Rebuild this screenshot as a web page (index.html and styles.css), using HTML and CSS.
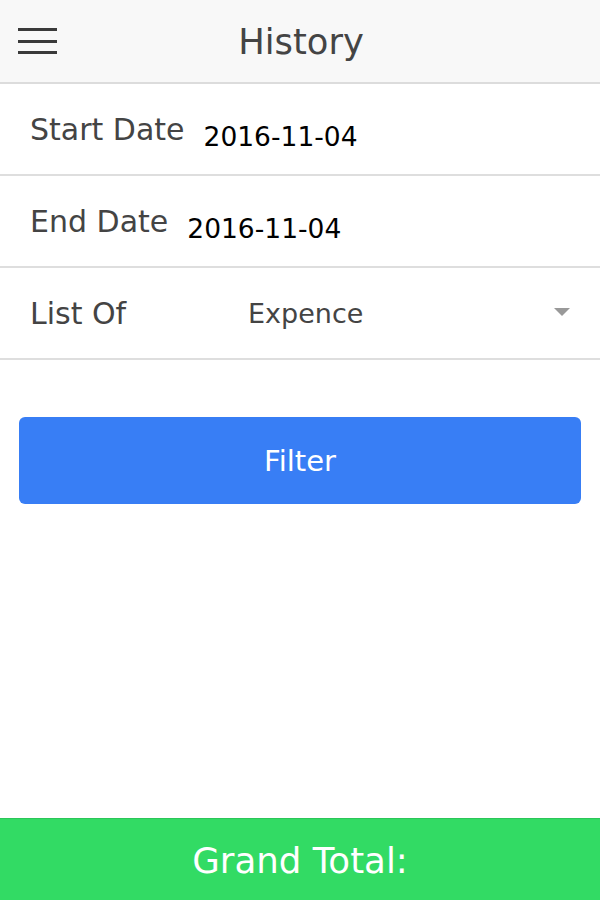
FILE: index.html
```html
<!DOCTYPE html>
<html>
<head>
<meta charset="utf-8">
<link rel="stylesheet" href="styles.css">
</head>
<body>
<div class="app">
  <header class="toolbar">
    <div class="menu-btn">
      <span class="bar"></span>
      <span class="bar"></span>
      <span class="bar"></span>
    </div>
    <div class="title">History</div>
    <div class="spacer"></div>
  </header>
  <main class="content">
    <div class="item">
      <span class="label">Start Date</span>
      <span class="value">2016-11-04</span>
    </div>
    <div class="item">
      <span class="label">End Date</span>
      <span class="value">2016-11-04</span>
    </div>
    <div class="item select-item">
      <span class="label wide">List Of</span>
      <span class="select-text">Expence</span>
      <span class="select-icon"></span>
    </div>
    <div class="btn-wrap">
      <button class="btn">Filter</button>
    </div>
  </main>
  <footer class="footer">
    <div class="footer-title">Grand Total:</div>
  </footer>
</div>
</body>
</html>
```
FILE: styles.css
```css
html, body {
  margin: 0;
  padding: 0;
  height: 100%;
}
body {
  font-family: "DejaVu Sans", sans-serif;
  background: #fff;
}
.app {
  display: flex;
  flex-direction: column;
  height: 900px;
}
.toolbar {
  height: 82px;
  background: #f8f8f8;
  border-bottom: 2px solid #dcdcdc;
  display: grid;
  grid-template-columns: 1fr auto 1fr;
  align-items: center;
}
.menu-btn {
  display: flex;
  flex-direction: column;
  gap: 8.5px;
  width: 39px;
  margin-left: 18px;
  margin-top: 0px;
}
.bar {
  display: block;
  height: 3px;
  background: #3a3a3a;
}
.title {
  font-size: 35.3px;
  color: #444;
  padding-left: 2px;
  margin-top: 1px;
}
.content {
  flex: 1;
}
.item {
  height: 90px;
  border-bottom: 2px solid #dedede;
  display: flex;
  align-items: center;
  padding-left: 30px;
}
.label {
  font-size: 30px;
  color: #444;
  margin-top: 0;
}
.value {
  font-size: 26.5px;
  color: #000;
  margin-left: 19px;
  margin-top: 14px;
}
.label.wide {
  width: 218px;
  margin-top: 0;
}
.select-text {
  font-size: 27px;
  color: #444;
  flex: 1;
}
.select-icon {
  width: 0;
  height: 0;
  border-left: 8px solid transparent;
  border-right: 8px solid transparent;
  border-top: 8px solid #999;
  margin-right: 30px;
  margin-top: -2px;
}
.btn-wrap {
  padding: 57px 19px 0;
}
.btn {
  display: block;
  width: 100%;
  height: 87px;
  border: none;
  border-radius: 6px;
  background: #387ef5;
  color: #fff;
  font-family: "DejaVu Sans", sans-serif;
  font-size: 29px;
  padding: 0;
}
.footer {
  height: 81px;
  background: #32db64;
  border-top: 1px solid #2cc659;
  display: flex;
  align-items: center;
  justify-content: center;
}
.footer-title {
  font-size: 35.6px;
  color: #fff;
  margin-top: 2px;
}
```
